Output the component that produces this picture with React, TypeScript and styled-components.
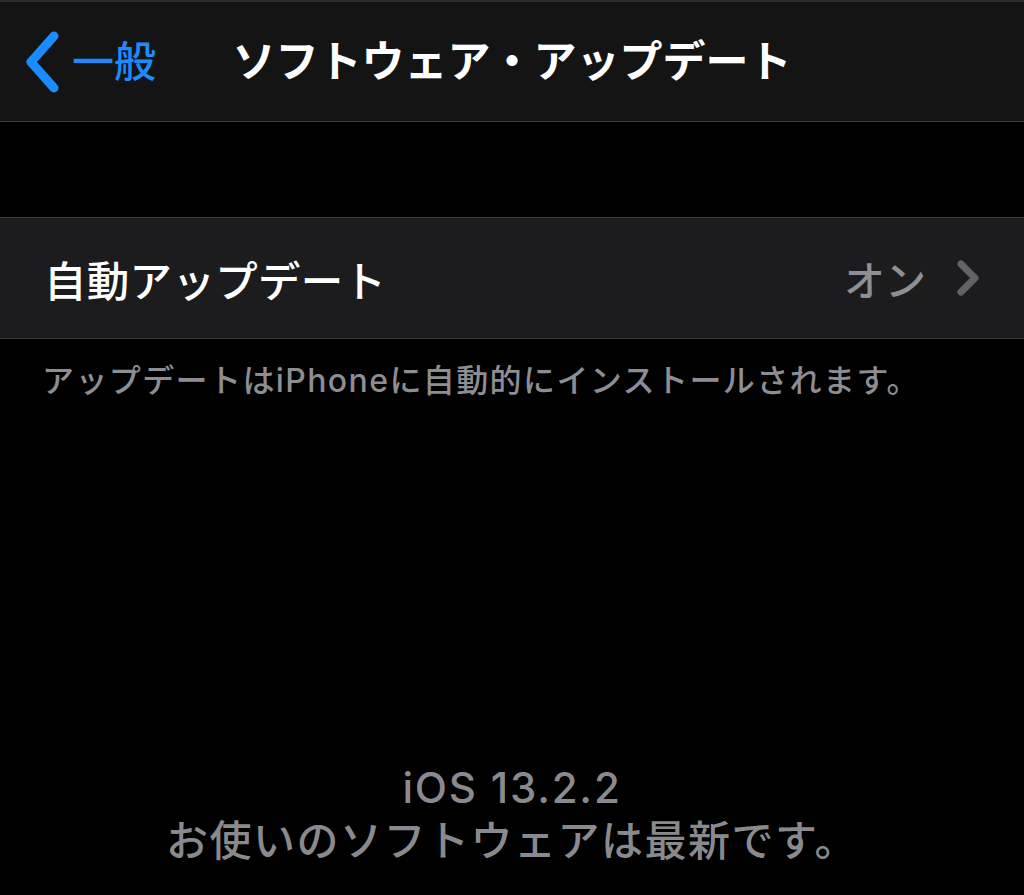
import styled, { createGlobalStyle } from 'styled-components';

const GlobalStyle = createGlobalStyle`
  html, body {
    margin: 0;
    padding: 0;
    background: #000;
  }
  body {
    font-family: 'Inter', 'Noto Sans CJK JP', sans-serif;
    -webkit-font-smoothing: antialiased;
  }
`;

const Screen = styled.div`
  min-height: 100vh;
  display: flex;
  flex-direction: column;
  background: #000;
`;

const NavBar = styled.header`
  height: 119px;
  display: grid;
  grid-template-columns: 1fr auto 1fr;
  align-items: center;
  background: #141414;
  border-top: 2px solid #2c2c2e;
  border-bottom: 1px solid #3a3a3c;
`;

const BackButton = styled.div`
  display: flex;
  align-items: center;
  gap: 12px;
  padding-left: 24px;
  color: #1b8cff;
  font-size: 42px;
  font-weight: 500;
  line-height: 1;
`;

const Title = styled.h1`
  margin: 0;
  color: #fff;
  font-size: 43px;
  font-weight: 700;
  line-height: 1;
`;

const Group = styled.section`
  margin-top: 95px;
  background: #1c1c1e;
  border-top: 1px solid #3a3a3c;
  border-bottom: 1px solid #3a3a3c;
`;

const Row = styled.div`
  height: 120px;
  display: flex;
  align-items: center;
  padding: 0 44px;
`;

const Label = styled.span`
  flex: 1;
  color: #fff;
  font-size: 42.5px;
  font-weight: 500;
  letter-spacing: 0.3px;
`;

const Value = styled.span`
  color: #8e8e93;
  font-size: 41px;
  font-weight: 500;
  margin-right: 30px;
`;

const Footnote = styled.p`
  margin: 22px 0 0;
  padding: 0 42px;
  color: #8d8d92;
  font-size: 32px;
  font-weight: 500;
  line-height: 40px;
  letter-spacing: 1.4px;
`;

const Version = styled.div`
  margin-top: auto;
  padding-bottom: 28px;
  text-align: center;
  color: #8a8a8e;
  font-size: 42px;
  font-weight: 500;
`;

const VersionLine = styled.div<{ $latin?: boolean }>`
  line-height: 53px;
  letter-spacing: ${(p) => (p.$latin ? '1.8px' : '1.5px')};
`;

function BackChevron() {
  return (
    <svg width="36" height="62" viewBox="0 0 36 62">
      <path
        d="M30 5 L7 31 L30 57"
        fill="none"
        stroke="#1b8cff"
        strokeWidth="9"
        strokeLinecap="round"
        strokeLinejoin="round"
      />
    </svg>
  );
}

function DisclosureChevron() {
  return (
    <svg width="24" height="36" viewBox="0 0 24 36">
      <path
        d="M5 4 L19 18 L5 32"
        fill="none"
        stroke="#636366"
        strokeWidth="7"
        strokeLinecap="round"
        strokeLinejoin="round"
      />
    </svg>
  );
}

export default function App() {
  return (
    <Screen>
      <GlobalStyle />
      <NavBar>
        <BackButton>
          <BackChevron />
          <span>一般</span>
        </BackButton>
        <Title>ソフトウェア・アップデート</Title>
        <div />
      </NavBar>

      <Group>
        <Row>
          <Label>自動アップデート</Label>
          <Value>オン</Value>
          <DisclosureChevron />
        </Row>
      </Group>
      <Footnote>アップデートはiPhoneに自動的にインストールされます。</Footnote>

      <Version>
        <VersionLine $latin>iOS 13.2.2</VersionLine>
        <VersionLine>お使いのソフトウェアは最新です。</VersionLine>
      </Version>
    </Screen>
  );
}
